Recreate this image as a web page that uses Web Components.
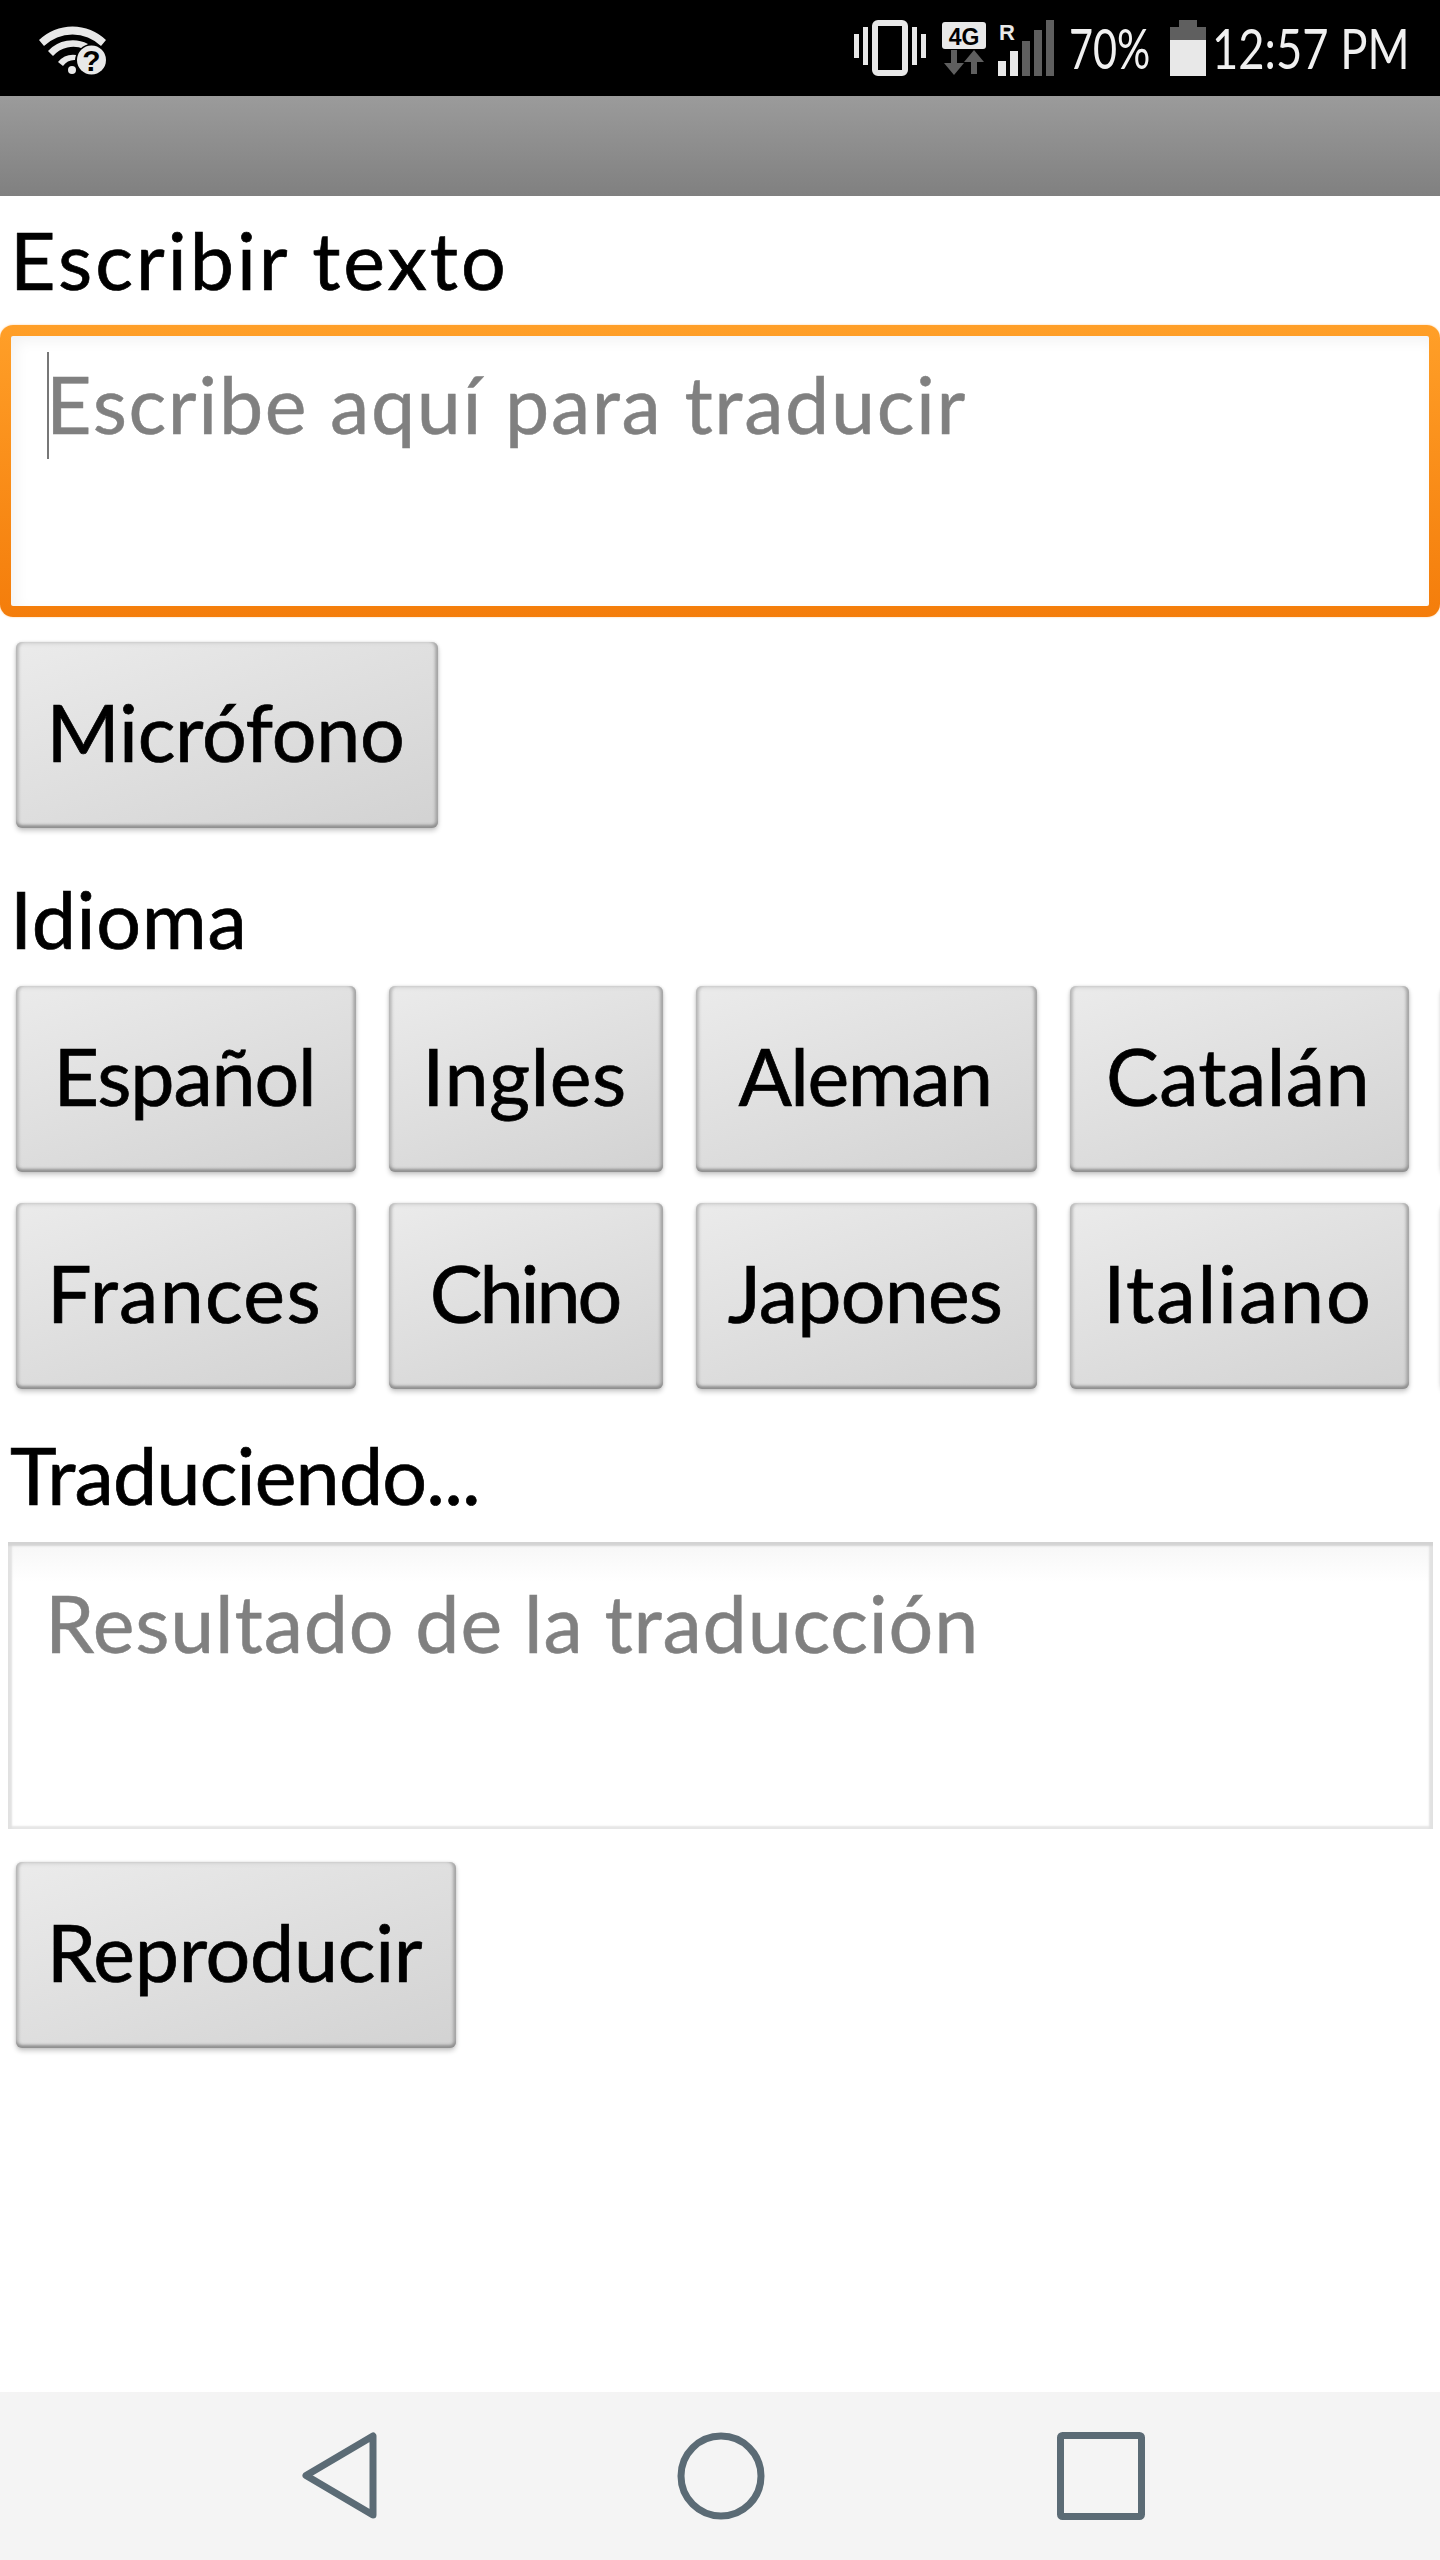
<!DOCTYPE html>
<html lang="es">
<head>
<meta charset="utf-8">
<title>Traductor</title>
<style>
  html, body { margin: 0; padding: 0; background: #fff; }
  body { font-family: Lato, "Noto Sans", sans-serif; color: #000; }
</style>
</head>
<body>
<app-screen>
  <status-bar></status-bar>
  <action-bar></action-bar>
  <main-content>
    <app-label style="--track:3px;height:129px">Escribir texto</app-label>
    <text-box focused placeholder="Escribe aquí para traducir" style="--track:1.65px"></text-box>
    <app-button style="--w:422px;--track:-.3px;margin-top:25px">Micrófono</app-button>
    <app-label style="--track:.7px;margin-top:27px">Idioma</app-label>
    <button-grid>
      <app-button style="--track:-1.2px">Español</app-button>
      <app-button style="--track:.5px">Ingles</app-button>
      <app-button style="--track:-1.5px">Aleman</app-button>
      <app-button style="--track:.4px">Catalán</app-button>
      <app-button class="cut"></app-button>
      <app-button style="--track:1.3px">Frances</app-button>
      <app-button style="--track:-3px">Chino</app-button>
      <app-button style="--track:-.8px">Japones</app-button>
      <app-button style="--track:1.9px">Italiano</app-button>
      <app-button class="cut"></app-button>
    </button-grid>
    <app-label style="--track:-.8px;margin-top:22px">Traduciendo...</app-label>
    <text-box placeholder="Resultado de la traducción" style="--track:.8px"></text-box>
    <app-button style="--w:440px;--track:-.3px;margin-top:33px">Reproducir</app-button>
  </main-content>
  <nav-bar></nav-bar>
</app-screen>

<script>
class AppScreen extends HTMLElement {
  connectedCallback() {
    this.attachShadow({ mode: 'open' });
    this.shadowRoot.innerHTML = `
      <style>
        :host { display: flex; flex-direction: column; width: 1440px; height: 2560px; overflow: hidden; background: #fff; }
      </style>
      <slot></slot>
    `;
  }
}

class StatusBar extends HTMLElement {
  connectedCallback() {
    this.attachShadow({ mode: 'open' });
    this.shadowRoot.innerHTML = `
      <style>
        :host { display: flex; align-items: flex-start; justify-content: space-between; flex: none; height: 96px; background: #000; color: #e8e8e8; box-sizing: border-box; padding: 20px 31px 0 39px; }
        svg { display: block; }
        .right { display: flex; align-items: flex-start; }
        .level, .time { display: block; font: 400 56px/56px Lato, sans-serif; color: #f0f0f0; white-space: nowrap; transform-origin: left center; }
        .level { width: 80px; margin-left: 15px; transform: scaleX(.74); }
        .time { width: 197px; margin-left: 6px; transform: scaleX(.81); }
        text { font-family: "Liberation Sans", sans-serif; font-weight: 700; }
      </style>
      <svg width="68" height="74" viewBox="39 20 68 74" aria-hidden="true" style="margin-top:2px;margin-bottom:-22px">
        <path d="M39 38 A48 48 0 0 1 106 38 L101 44 A41 41 0 0 0 44 44 Z" fill="#e8e8e8"/>
        <path d="M48 49 A34 34 0 0 1 88 42 L84 47 A27 27 0 0 0 53 54 Z" fill="#e8e8e8"/>
        <path d="M58 60 A20 20 0 0 1 76 53 L75 58 A14 14 0 0 0 63 64 Z" fill="#e8e8e8"/>
        <circle cx="72" cy="68" r="4" fill="#e8e8e8"/>
        <circle cx="91.5" cy="58" r="16" fill="#000"/>
        <circle cx="91.5" cy="58" r="14.5" fill="#e8e8e8"/>
        <text x="91.5" y="69" font-size="30" text-anchor="middle" fill="#000">?</text>
      </svg>
      <div class="right">
        <svg width="200" height="56" viewBox="854 20 200 56" aria-hidden="true">
          <rect x="854" y="34" width="5" height="24" fill="#e8e8e8"/>
          <rect x="863" y="27" width="5" height="38" fill="#e8e8e8"/>
          <rect x="875" y="23" width="30" height="50" rx="3" fill="none" stroke="#e8e8e8" stroke-width="6"/>
          <rect x="912" y="27" width="5" height="38" fill="#e8e8e8"/>
          <rect x="921" y="34" width="5" height="24" fill="#e8e8e8"/>
          <rect x="942" y="22" width="44" height="27" rx="3" fill="#e8e8e8"/>
          <text x="964" y="45" font-size="23" text-anchor="middle" fill="#000">4G</text>
          <path d="M951 50 H957 V63 H964 L954 75 L944 63 H951 Z" fill="#5f5f5f"/>
          <path d="M971 74 H977 V62 H984 L974 50 L964 62 H971 Z" fill="#5f5f5f"/>
          <text x="1007" y="40" font-size="22" text-anchor="middle" fill="#e8e8e8">R</text>
          <rect x="998" y="61" width="8" height="15" fill="#e8e8e8"/>
          <rect x="1010" y="51" width="8" height="25" fill="#e8e8e8"/>
          <rect x="1022" y="41" width="8" height="35" fill="#5f5f5f"/>
          <rect x="1034" y="30" width="8" height="46" fill="#5f5f5f"/>
          <rect x="1046" y="20" width="8" height="56" fill="#5f5f5f"/>
        </svg>
        <span class="level">70%</span>
        <svg width="36" height="56" viewBox="0 0 36 56" aria-hidden="true" style="margin-left:21px">
          <path d="M9 0 H27 V7 H36 V20 H0 V7 H9 Z" fill="#5f5f5f"/>
          <rect x="0" y="20" width="36" height="36" fill="#e8e8e8"/>
        </svg>
        <span class="time">12:57 PM</span>
      </div>
    `;
  }
}

class ActionBar extends HTMLElement {
  connectedCallback() {
    this.attachShadow({ mode: 'open' });
    this.shadowRoot.innerHTML = `
      <style>
        :host { display: block; flex: none; height: 100px; background: linear-gradient(#9b9b9b, #808080); }
      </style>
    `;
  }
}

class MainContent extends HTMLElement {
  connectedCallback() {
    this.attachShadow({ mode: 'open' });
    this.shadowRoot.innerHTML = `
      <style>
        :host { display: flex; flex-direction: column; align-items: flex-start; flex: 1; min-height: 0; }
      </style>
      <slot></slot>
    `;
  }
}

class AppLabel extends HTMLElement {
  connectedCallback() {
    this.attachShadow({ mode: 'open' });
    this.shadowRoot.innerHTML = `
      <style>
        :host { display: block; box-sizing: border-box; height: 131px; padding: 18px 0 0 10px; font: 400 79px/92px Lato, sans-serif; -webkit-text-stroke: .7px #000; letter-spacing: var(--track, 0); color: #000; white-space: nowrap; }
      </style>
      <slot></slot>
    `;
  }
}

class TextBox extends HTMLElement {
  connectedCallback() {
    const focused = this.hasAttribute('focused');
    this.attachShadow({ mode: 'open' });
    this.shadowRoot.innerHTML = `
      <style>
        :host { display: block; box-sizing: border-box; flex: none; }
        :host(:not([focused])) { width: 1425px; height: 287px; margin-left: 8px; padding: 35px 0 0 37px; background: linear-gradient(#f6f6f6, #fff 14%); box-shadow: inset 0 5px 2px -1px #d3d3d3, inset 5px 0 2px -1px #e2e2e2, inset -5px 0 2px -1px #e2e2e2, inset 0 -4px 2px -1px #e6e6e6; }
        :host([focused]) { width: 1440px; height: 292px; border-radius: 13px; padding: 11px; background: linear-gradient(#ff9f28, #f47d0b); box-shadow: 0 0 2px rgba(255, 150, 30, .5); }
        .inner { display: flex; align-items: flex-start; height: 100%; box-sizing: border-box; }
        :host([focused]) .inner { background: #fff; box-shadow: inset 5px 5px 14px rgba(0, 0, 0, .05); border-radius: 2px; padding: 22px 0 0 37px; }
        :host(:not([focused])) .inner { height: auto; }
        .caret { flex: none; width: 2px; height: 107px; background: #777; margin: -6px 0 0 -1px; }
        .hint { font: 400 79px/92px Lato, sans-serif; -webkit-text-stroke: .5px #808080; letter-spacing: var(--track, 0); color: #808080; white-space: nowrap; }
        :host([focused]) .hint { margin-left: -3px; }
      </style>
      <div class="inner">${focused ? '<span class="caret"></span>' : ''}<span class="hint">${this.getAttribute('placeholder')}</span></div>
    `;
  }
}

class AppButton extends HTMLElement {
  connectedCallback() {
    this.attachShadow({ mode: 'open' });
    this.shadowRoot.innerHTML = `
      <style>
        :host { display: flex; align-items: center; justify-content: center; box-sizing: border-box; flex: none; width: var(--w, auto); height: 186px; padding: 0 3px 7px 0; margin-left: var(--ml, 16px); border-radius: 6px; background: linear-gradient(160deg, #ebebeb, #d2d2d2); box-shadow: inset 0 -4px 3px -1px #8f8f8f, inset 4px 0 3px -1px #bdbdbd, inset -4px 0 3px -1px #a9a9a9, inset 0 4px 3px -1px #dcdcdc, 0 3px 5px rgba(0, 0, 0, .2), 0 0 3px rgba(0, 0, 0, .12); font: 400 79px/92px Lato, sans-serif; -webkit-text-stroke: .7px #000; letter-spacing: var(--track, 0); color: #000; white-space: nowrap; }
      </style>
      <slot></slot>
    `;
  }
}

class ButtonGrid extends HTMLElement {
  connectedCallback() {
    this.attachShadow({ mode: 'open' });
    this.shadowRoot.innerHTML = `
      <style>
        :host { display: grid; grid-template-columns: 340px 274px 341px 339px 100px; gap: 31px 33px; --ml: 0; margin-left: 16px; width: 1600px; }
        ::slotted(.cut) { margin-left: -1px; }
      </style>
      <slot></slot>
    `;
  }
}

class NavBar extends HTMLElement {
  connectedCallback() {
    this.attachShadow({ mode: 'open' });
    this.shadowRoot.innerHTML = `
      <style>
        :host { display: flex; align-items: flex-start; flex: none; height: 168px; background: #f4f4f4; padding: 40px 0 0 301px; box-sizing: border-box; }
        svg { display: block; }
        svg + svg { margin-left: 300px; }
        svg + svg + svg { margin-left: 292px; }
      </style>
      <svg width="76" height="87" viewBox="0 0 76 87" aria-hidden="true">
        <path d="M72 4 V83 L5 43.5 Z" fill="none" stroke="#5b6b75" stroke-width="7" stroke-linejoin="round"/>
      </svg>
      <svg width="88" height="88" viewBox="0 0 88 88" aria-hidden="true">
        <circle cx="44" cy="44" r="40" fill="none" stroke="#5b6b75" stroke-width="7"/>
      </svg>
      <svg width="88" height="88" viewBox="0 0 88 88" aria-hidden="true">
        <rect x="3.5" y="3.5" width="81" height="81" rx="2" fill="none" stroke="#5b6b75" stroke-width="7"/>
      </svg>
    `;
  }
}

customElements.define('app-screen', AppScreen);
customElements.define('status-bar', StatusBar);
customElements.define('action-bar', ActionBar);
customElements.define('main-content', MainContent);
customElements.define('app-label', AppLabel);
customElements.define('text-box', TextBox);
customElements.define('app-button', AppButton);
customElements.define('button-grid', ButtonGrid);
customElements.define('nav-bar', NavBar);
</script>
</body>
</html>
